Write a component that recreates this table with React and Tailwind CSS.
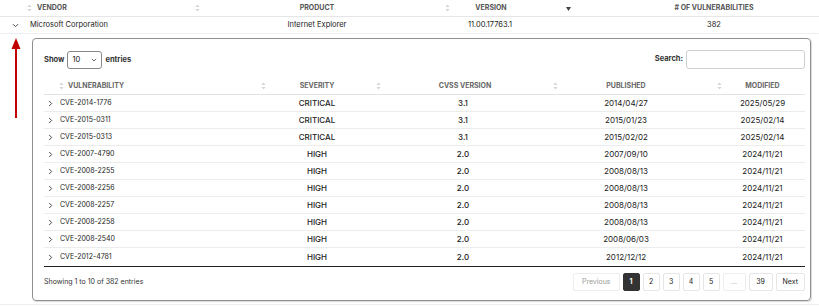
import React from 'react';

const rows = [
  { id: 'CVE-2014-1776', sev: 'CRITICAL', cvss: '3.1', pub: '2014/04/27', mod: '2025/05/29' },
  { id: 'CVE-2015-0311', sev: 'CRITICAL', cvss: '3.1', pub: '2015/01/23', mod: '2025/02/14' },
  { id: 'CVE-2015-0313', sev: 'CRITICAL', cvss: '3.1', pub: '2015/02/02', mod: '2025/02/14' },
  { id: 'CVE-2007-4790', sev: 'HIGH', cvss: '2.0', pub: '2007/09/10', mod: '2024/11/21' },
  { id: 'CVE-2008-2255', sev: 'HIGH', cvss: '2.0', pub: '2008/08/13', mod: '2024/11/21' },
  { id: 'CVE-2008-2256', sev: 'HIGH', cvss: '2.0', pub: '2008/08/13', mod: '2024/11/21' },
  { id: 'CVE-2008-2257', sev: 'HIGH', cvss: '2.0', pub: '2008/08/13', mod: '2024/11/21' },
  { id: 'CVE-2008-2258', sev: 'HIGH', cvss: '2.0', pub: '2008/08/13', mod: '2024/11/21' },
  { id: 'CVE-2008-2540', sev: 'HIGH', cvss: '2.0', pub: '2008/06/03', mod: '2024/11/21' },
  { id: 'CVE-2012-4781', sev: 'HIGH', cvss: '2.0', pub: '2012/12/12', mod: '2024/11/21' },
];

const pages = ['1', '2', '3', '4', '5', '…', '39'];

const SortIcon = () => (
  <svg width="5" height="8" viewBox="0 0 5 8" className="shrink-0">
    <path d="M2.5 0.5 L4.5 3 L0.5 3 Z" fill="#d4d4d4" />
    <path d="M2.5 7.5 L4.5 5 L0.5 5 Z" fill="#d4d4d4" />
  </svg>
);

const Chevron = ({ down }) => (
  <svg width="7" height="7" viewBox="0 0 7 7" className="shrink-0">
    {down ? (
      <path d="M1 2.2 L3.5 4.7 L6 2.2" fill="none" stroke="#333" strokeWidth="0.9" />
    ) : (
      <path d="M2.2 1 L4.7 3.5 L2.2 6" fill="none" stroke="#333" strokeWidth="0.9" />
    )}
  </svg>
);

const outerCols = 'grid grid-cols-[32px_168px_250px_122px_1fr]';
const innerCols = 'grid grid-cols-[14px_208px_115px_177px_164px_1fr]';

export default function App() {
  return (
    <div className="relative w-[819px] h-[306px] bg-white overflow-hidden [font-family:Inter,sans-serif] text-[#222]">
      {/* outer header */}
      <div className={`${outerCols} h-[17px] border-b border-[#e6e6e6] text-[7px] font-bold text-[#555] uppercase`}>
        <div className="flex items-center justify-end"><SortIcon /></div>
        <div className="flex items-center justify-between pl-[5px]">
          <span>Vendor</span>
          <SortIcon />
        </div>
        <div className="flex items-center">
          <span className="flex-1 text-center pr-[11px]">Product</span>
          <SortIcon />
        </div>
        <div className="flex items-center">
          <span className="flex-1 text-center pr-[34px]">Version</span>
          <svg width="5" height="4" viewBox="0 0 5 4" className="mr-[1px] mt-[2px]">
            <path d="M0 0 L5 0 L2.5 4 Z" fill="#444" />
          </svg>
        </div>
        <div className="flex items-center justify-center pl-[37px]"># of Vulnerabilities</div>
      </div>

      {/* outer row */}
      <div className={`${outerCols} h-[17px] border-b border-[#eeeeee] text-[7.5px]`}>
        <div className="flex items-center pl-[12px]"><Chevron down /></div>
        <div className="flex items-center -ml-[2px]">Microsoft Corporation</div>
        <div className="flex items-center justify-center pr-[16px]">Internet Explorer</div>
        <div className="flex items-center justify-center pr-[42px]">11.00.17763.1</div>
        <div className="flex items-center justify-center pl-[37px]">382</div>
      </div>

      {/* expanded child */}
      <div className="pl-[32px] pr-[8px] pt-[4px] pb-[3px] border-b border-[#eeeeee]">
        <div className="border border-[#8f8f8f] rounded-[4px] shadow-[1px_1px_1px_rgba(0,0,0,0.15)] pl-[11px] pr-[5px] pt-[10px] pb-[9px]">
          <div className="flex items-center justify-between h-[20px] text-[7.5px] font-bold text-[#333]">
            <div className="flex items-center gap-[3px] pt-[2px]">
              <span>Show</span>
              <div className="w-[35px] h-[18px] border border-[#888] rounded-[3px] flex items-center justify-between px-[4px] font-normal text-[#111] text-[7.5px]">
                <span>10</span>
                <svg width="6" height="4" viewBox="0 0 6 4"><path d="M0.8 0.8 L3 3 L5.2 0.8" fill="none" stroke="#444" strokeWidth="0.8" /></svg>
              </div>
              <span>entries</span>
            </div>
            <div className="flex items-center gap-[3px]">
              <span>Search:</span>
              <div className="w-[119px] h-[19px] border border-[#cfcfcf] rounded-[3px]" />
            </div>
          </div>

          {/* inner header */}
          <div className={`${innerCols} h-[17px] mt-[9px] border-b border-[#e3e3e3] text-[7px] font-bold text-[#666] uppercase`}>
            <div />
            <div className="flex items-center justify-between pl-[1px]">
              <span className="flex items-center gap-[4px]"><SortIcon /><span>Vulnerability</span></span>
              <SortIcon />
            </div>
            <div className="flex items-center">
              <span className="flex-1 text-center pr-[8px]">Severity</span>
              <SortIcon />
            </div>
            <div className="flex items-center">
              <span className="flex-1 text-center pr-[4px]">CVSS Version</span>
              <SortIcon />
            </div>
            <div className="flex items-center">
              <span className="flex-1 text-center pr-[23px]">Published</span>
              <SortIcon />
            </div>
            <div className="flex items-center justify-center pr-[2px]">Modified</div>
          </div>

          {/* inner rows */}
          <div className="border-b border-[#222]">
            {rows.map((r, i) => (
              <div
                key={r.id}
                className={`${innerCols} h-[17px] text-[8px] ${i < rows.length - 1 ? 'border-b border-[#ececec]' : 'h-[18px]'}`}
              >
                <div className="flex items-center pl-[3px]"><Chevron /></div>
                <div className="flex items-center pl-[2px] text-[7px]">{r.id}</div>
                <div className="flex items-center justify-center pr-[13px] font-medium">{r.sev}</div>
                <div className="flex items-center justify-center pr-[13px] font-medium">{r.cvss}</div>
                <div className="flex items-center justify-center pr-[28px]">{r.pub}</div>
                <div className="flex items-center justify-center pr-[2px]">{r.mod}</div>
              </div>
            ))}
          </div>

          {/* footer */}
          <div className="flex items-center justify-between mt-[6px] text-[7px]">
            <span className="text-[#333] pt-[1px]">Showing 1 to 10 of 382 entries</span>
            <div className="flex items-center gap-[3px]">
              <div className="h-[18px] px-[8px] flex items-center border border-[#eeeeee] rounded-[2px] text-[#999]">Previous</div>
              {pages.map((p, i) => (
                <div
                  key={p}
                  className={`h-[18px] flex items-center justify-center rounded-[2px] border ${
                    i === 0
                      ? 'bg-[#333] border-[#333] text-white font-bold w-[17px]'
                      : p === '39'
                      ? 'border-[#e6e6e6] w-[24px]'
                      : p === '…'
                      ? 'border-[#eeeeee] text-[#aaa] w-[23px]'
                      : 'border-[#e6e6e6] w-[17px]'
                  }`}
                >
                  {p}
                </div>
              ))}
              <div className="h-[18px] px-[6px] flex items-center border border-[#e6e6e6] rounded-[2px]">Next</div>
            </div>
          </div>
        </div>
      </div>

      {/* red annotation arrow */}
      <svg width="12" height="82" viewBox="0 0 12 82" className="absolute left-[10px] top-[38px]">
        <path d="M6 0 L10.5 11 L1.5 11 Z" fill="#c00000" />
        <rect x="5" y="10" width="2" height="70" fill="#c00000" />
      </svg>
    </div>
  );
}
